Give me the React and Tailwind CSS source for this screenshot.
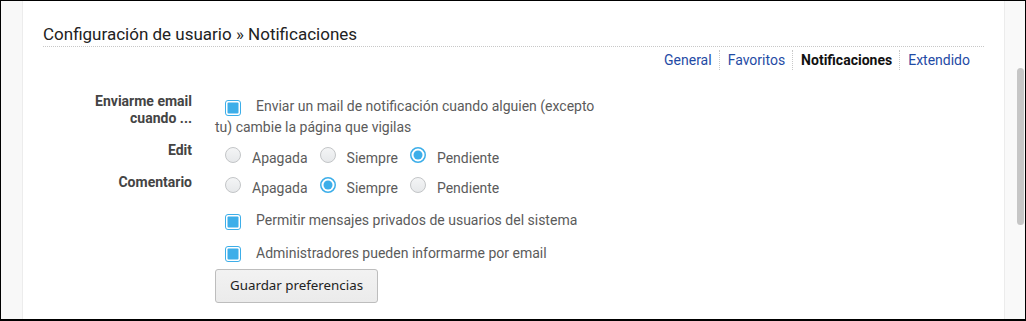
import React from "react";

const font = { fontFamily: "Roboto, 'Liberation Sans', sans-serif" };

function Checkbox() {
  return (
    <svg className="inline-block shrink-0" width="16" height="16" viewBox="0 0 16 16">
      <rect x="0.5" y="0.5" width="15" height="15" rx="2.5" fill="#ffffff" stroke="#3daee9" />
      <rect x="2.5" y="2.5" width="11" height="11" rx="1" fill="#3daee9" />
    </svg>
  );
}

function Radio({ checked }) {
  if (checked) {
    return (
      <svg className="shrink-0" width="16" height="16" viewBox="0 0 16 16">
        <circle cx="8" cy="8" r="7.25" fill="#ffffff" stroke="#3daee9" strokeWidth="1.5" />
        <circle cx="8" cy="8" r="4.5" fill="#3daee9" />
      </svg>
    );
  }
  return (
    <svg className="shrink-0" width="16" height="16" viewBox="0 0 16 16">
      <defs>
        <linearGradient id="rg" x1="0" y1="0" x2="0" y2="1">
          <stop offset="0" stopColor="#f4f5f6" />
          <stop offset="1" stopColor="#e6e8ea" />
        </linearGradient>
      </defs>
      <circle cx="8" cy="8" r="7.5" fill="url(#rg)" stroke="#c3c5c7" />
    </svg>
  );
}

function RadioGroup({ value }) {
  const options = ["Apagada", "Siempre", "Pendiente"];
  return (
    <div className="flex items-start text-[14px] leading-[20px] text-[#5b5b5b]">
      {options.map((option, i) => (
        <div className={`flex items-start ${i === 0 ? "ml-[10px]" : "ml-[12px]"}`} key={option}>
          <span className="-mt-[1px] mr-[11px]">
            <Radio checked={value === option} />
          </span>
          {option}
        </div>
      ))}
    </div>
  );
}

function Label({ children, className = "" }) {
  return (
    <div className={`w-[149px] shrink-0 text-right text-[14px] font-bold leading-[17px] text-[#444] ${className}`}>
      {children}
    </div>
  );
}

export default function App() {
  return (
    <div
      className="flex h-[321px] w-[1026px] border-x border-t border-b-2 border-black bg-white"
      style={font}
    >
      <div className="w-[22px] shrink-0 border-r border-[#ececec] bg-[#f8f8f8]" />

      <main className="min-w-0 flex-1 px-[20px] pt-[21px]">
        <h1 className="border-b border-dotted border-[#c8c8c8] text-[17px] leading-[24px] text-[#222]">
          Configuración de usuario » Notificaciones
        </h1>

        <nav className="mr-[7px] mt-[3px] flex justify-end text-[14px] leading-[20px]">
          {[
            { label: "General" },
            { label: "Favoritos" },
            { label: "Notificaciones", active: true },
            { label: "Extendido" },
          ].map((tab, i) => (
            <span
              className={`pl-[8px] pr-[7px] ${i > 0 ? "border-l border-dotted border-[#c8c8c8]" : ""} ${
                tab.active ? "font-bold text-[#111]" : "text-[#1f4ba5]"
              }`}
              key={tab.label}
            >
              {tab.label}
            </span>
          ))}
        </nav>

        <div className="mt-[23px] flex">
          <Label>
            Enviarme email
            <br />
            cuando ...
          </Label>
          <div className="ml-[23px] w-[392px] pt-[3px] text-[14px] leading-[20px] text-[#5b5b5b]">
            <span className="ml-[10px] mr-[15px] inline-block align-[-1px]">
              <Checkbox />
            </span>
            Enviar un mail de notificación cuando alguien (excepto tu) cambie la página que vigilas
          </div>
        </div>

        <div className="mt-[5px] flex">
          <Label>Edit</Label>
          <div className="ml-[23px] pt-[6px]">
            <RadioGroup value="Pendiente" />
          </div>
        </div>

        <div className="mt-[6px] flex">
          <Label>Comentario</Label>
          <div className="ml-[23px] pt-[4px]">
            <RadioGroup value="Siempre" />
          </div>
        </div>

        <div className="ml-[172px] mt-[12px] flex items-start text-[14px] leading-[20px] text-[#5b5b5b]">
          <span className="ml-[10px] mr-[15px] mt-[1px]">
            <Checkbox />
          </span>
          Permitir mensajes privados de usuarios del sistema
        </div>

        <div className="ml-[172px] mt-[12px] flex items-start text-[14px] leading-[20px] text-[#5b5b5b]">
          <span className="ml-[10px] mr-[15px]">
            <Checkbox />
          </span>
          Administradores pueden informarme por email
        </div>

        <div className="ml-[172px] mt-[6px]">
          <button
            className="h-[34px] rounded-[3px] border border-[#bdbdbd] bg-[linear-gradient(#f2f2f2,#ebebeb)] px-[14px] text-[13.333px] text-[#222]"
            style={{ fontFamily: "'Noto Sans', 'Open Sans', sans-serif" }}
            type="button"
          >
            Guardar preferencias
          </button>
        </div>
      </main>

      <div className="relative w-[21px] shrink-0 border-l border-[#ececec] bg-[#f9f9f9]">
        <div className="absolute right-[1px] top-[67px] h-[157px] w-[7px] rounded-full bg-[#c6c6c6]" />
      </div>
    </div>
  );
}
